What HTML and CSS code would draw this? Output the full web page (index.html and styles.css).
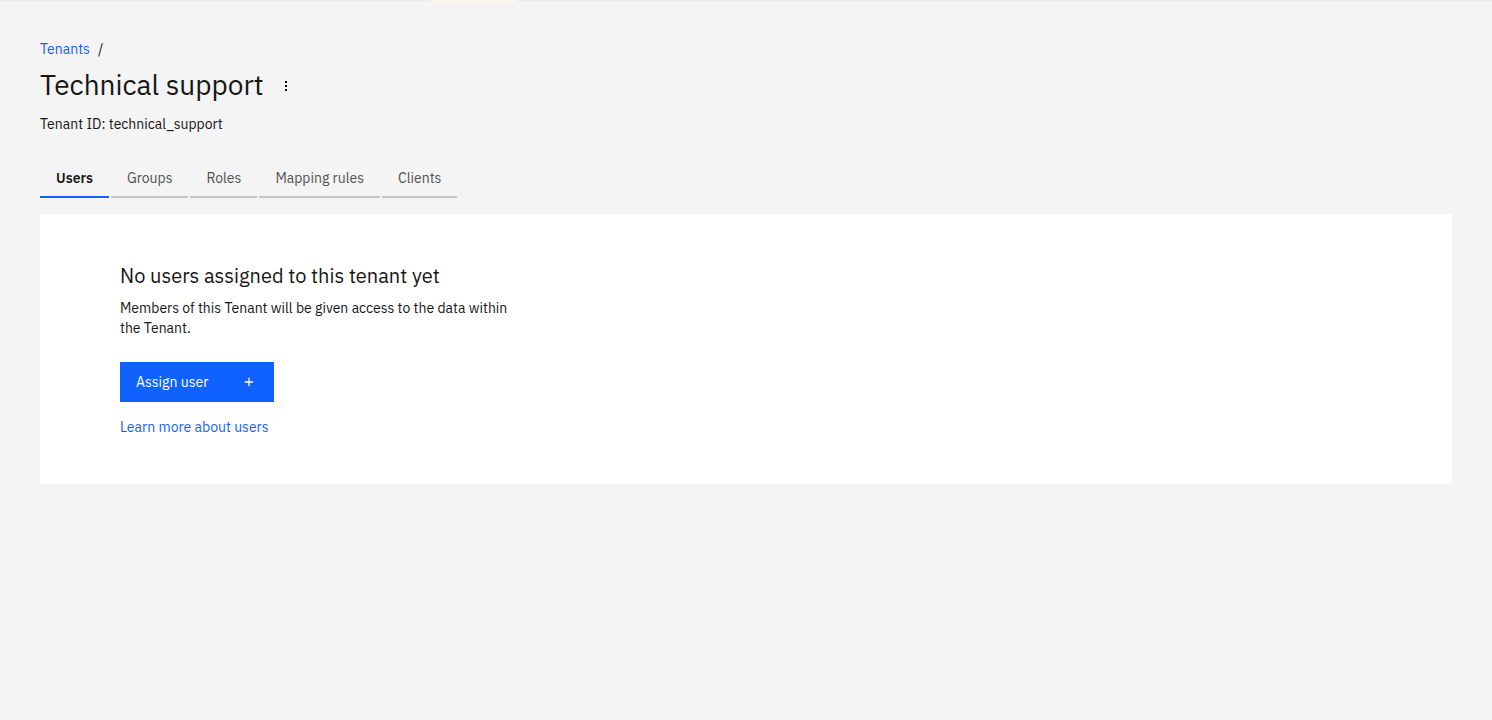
FILE: index.html
```html
<!DOCTYPE html>
<html lang="en">
<head>
    <meta charset="UTF-8">
    <meta name="viewport" content="width=device-width, initial-scale=1.0">
    <title>Technical support</title>
    <link rel="stylesheet" href="styles.css">
</head>
<body>
    <div class="top-line"><div class="top-line-mark"></div></div>
    <main class="page">
        <nav class="breadcrumb" aria-label="Breadcrumb">
            <a href="#">Tenants</a>
            <span>/</span>
        </nav>
        <div class="title-row">
            <h1>Technical support</h1>
            <button class="menu-button" type="button" aria-label="Options">
                <svg width="16" height="16" viewBox="0 0 32 32" fill="currentColor">
                    <path d="M14 8h4v4h-4zM14 16h4v4h-4zM14 24h4v4h-4z"/>
                </svg>
            </button>
        </div>
        <p class="tenant-id">Tenant ID: technical_support</p>

        <div class="tabs" role="tablist">
            <button class="tab selected" type="button" role="tab" aria-selected="true">Users</button>
            <button class="tab" type="button" role="tab" aria-selected="false">Groups</button>
            <button class="tab" type="button" role="tab" aria-selected="false">Roles</button>
            <button class="tab" type="button" role="tab" aria-selected="false">Mapping rules</button>
            <button class="tab" type="button" role="tab" aria-selected="false">Clients</button>
        </div>

        <section class="panel" role="tabpanel">
            <h2>No users assigned to this tenant yet</h2>
            <p>Members of this Tenant will be given access to the data within the Tenant.</p>
            <button class="primary-button" type="button">
                <span>Assign user</span>
                <svg width="16" height="16" viewBox="0 0 32 32" fill="currentColor" aria-hidden="true">
                    <path d="M15.3 14.7V7.5h-2.6v7.2H5.5v2.6h7.2v7.2h2.6v-7.2h7.2v-2.6z"/>
                </svg>
            </button>
            <a class="learn-more" href="#">Learn more about users</a>
        </section>
    </main>
</body>
</html>
```
FILE: styles.css
```css
:root {
    --background: #f4f4f4;
    --layer: #ffffff;
    --text-primary: #161616;
    --text-secondary: #525252;
    --border: #c6c6c6;
    --blue: #0f62fe;
}

* {
    box-sizing: border-box;
    margin: 0;
    padding: 0;
}

body {
    font-family: 'IBM Plex Sans', 'Noto Sans', sans-serif;
    font-size: 14px;
    line-height: 20px;
    background-color: var(--background);
    color: var(--text-primary);
}

button {
    font: inherit;
    border: none;
    background: none;
    cursor: pointer;
}

a {
    color: var(--blue);
    text-decoration: none;
}

a:hover {
    text-decoration: underline;
}

.top-line {
    height: 1px;
    padding-left: 430px;
    background-color: #ebebeb;
}

.top-line-mark {
    width: 86px;
    height: 1px;
    background-color: #fbf9e6;
}

.page {
    padding: 39px 40px;
}

.breadcrumb {
    display: flex;
    gap: 8px;
    line-height: 18px;
}

.title-row {
    display: flex;
    align-items: center;
    gap: 6px;
    margin: 9px 0 11px;
}

h1 {
    font-size: 28px;
    font-weight: 400;
    line-height: 36px;
}

.menu-button {
    display: flex;
    align-items: center;
    justify-content: center;
    width: 32px;
    height: 32px;
}

.tabs {
    display: flex;
    gap: 2px;
    margin: 24px 0 16px;
}

.tab {
    height: 40px;
    padding: 2px 16px 0;
    border-bottom: 2px solid var(--border);
    color: var(--text-secondary);
}

.tab.selected {
    border-bottom-color: var(--blue);
    color: var(--text-primary);
    font-weight: 600;
}

.panel {
    padding: 48px 80px;
    background-color: var(--layer);
}

.panel h2 {
    font-size: 20px;
    font-weight: 400;
    line-height: 28px;
}

.panel p {
    max-width: 400px;
    margin: 8px 0 24px;
}

.primary-button {
    display: flex;
    align-items: center;
    justify-content: space-between;
    width: 154px;
    height: 40px;
    padding: 0 16px;
    margin-bottom: 16px;
    background-color: var(--blue);
    color: #ffffff;
}

.primary-button:hover {
    background-color: #0050e6;
}

.learn-more {
    display: block;
    width: fit-content;
    line-height: 18px;
}
```
